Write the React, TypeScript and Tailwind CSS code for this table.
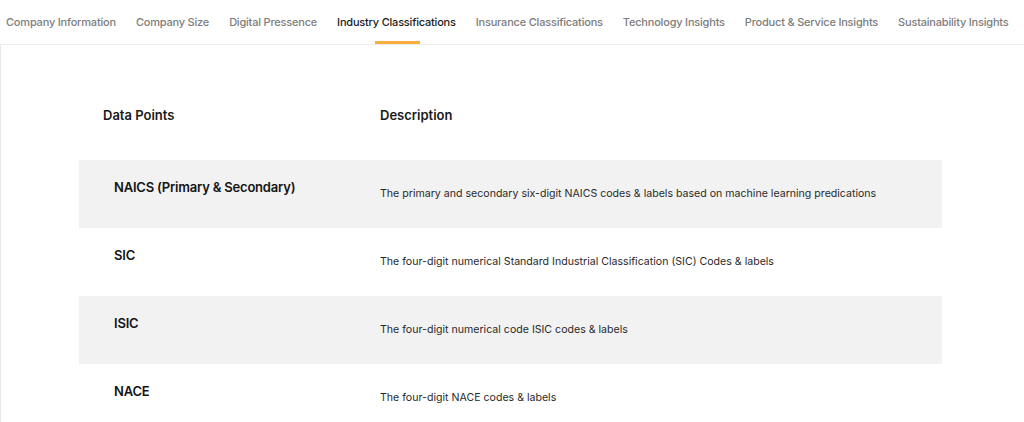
const tabs = [
  'Company Information',
  'Company Size',
  'Digital Pressence',
  'Industry Classifications',
  'Insurance Classifications',
  'Technology Insights',
  'Product & Service Insights',
  'Sustainability Insights',
];

const rows = [
  {
    name: 'NAICS (Primary & Secondary)',
    desc: 'The primary and secondary six-digit NAICS codes & labels based on machine learning predications',
  },
  {
    name: 'SIC',
    desc: 'The four-digit numerical Standard Industrial Classification (SIC) Codes & labels',
  },
  { name: 'ISIC', desc: 'The four-digit numerical code ISIC codes & labels' },
  { name: 'NACE', desc: 'The four-digit NACE codes & labels' },
];

export default function App() {
  const active = 'Industry Classifications';
  return (
    <div className="h-[422px] w-[1024px] overflow-hidden bg-white font-['Inter',sans-serif]">
      {/* Tabs */}
      <nav className="flex h-[45px] items-stretch border-b border-[#ededed] pl-[6px]">
        {tabs.map((t) => (
          <div
            key={t}
            className={`relative flex items-center whitespace-nowrap pr-[20px] text-[11px] font-medium tracking-[-0.2px] ${
              t === active ? 'text-[#1c1c1c]' : 'text-[#7d7d7d]'
            }`}
          >
            {t}
            {t === active && (
              <span className="absolute bottom-0 left-[38px] h-[3px] w-[45px] bg-[#f9ad3c]" />
            )}
          </div>
        ))}
      </nav>

      {/* Content */}
      <div className="h-full border-l border-[#e8e8e8] pl-[78px] pt-[61px]">
        <div className="w-[863px]">
          <div className="flex h-[54px] text-[13px] font-semibold text-[#1a1a1a]">
            <div className="w-[301px] pl-[24px]">Data Points</div>
            <div>Description</div>
          </div>
          {rows.map((r, i) => (
            <div
              key={r.name}
              className={`flex h-[68px] ${i % 2 === 0 ? 'bg-[#f2f2f2]' : 'bg-white'}`}
            >
              <div className="w-[301px] pl-[35px] pt-[18px] text-[13px] font-semibold tracking-[-0.2px] text-[#141414]">
                {r.name}
              </div>
              <div className="pt-[26px] text-[10.6px] text-[#2a2a2a]">{r.desc}</div>
            </div>
          ))}
        </div>
      </div>
    </div>
  );
}
